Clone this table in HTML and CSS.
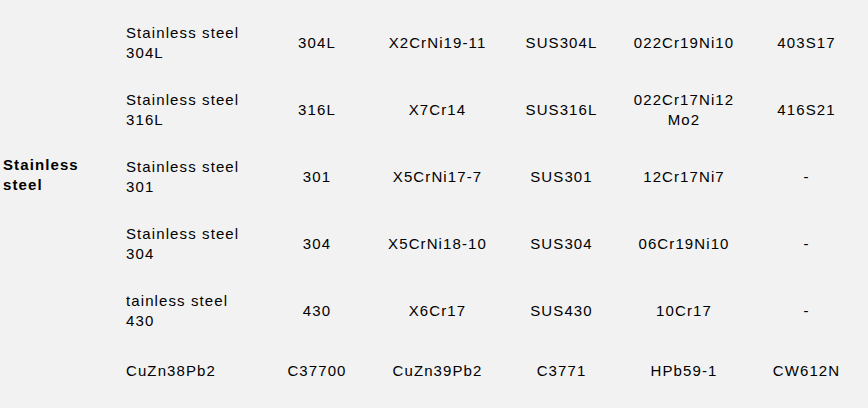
FILE: index.html
```html
<!DOCTYPE html>
<html>
<head>
<meta charset="utf-8">
<link rel="stylesheet" href="styles.css">
</head>
<body>
<table class="grades">
  <colgroup>
    <col class="c-cat">
    <col class="c-name">
    <col class="c-3">
    <col class="c-4">
    <col class="c-5">
    <col class="c-6">
    <col class="c-7">
  </colgroup>
  <tbody>
    <tr>
      <td class="cat" rowspan="5">Stainless steel</td>
      <td class="name">Stainless steel 304L</td>
      <td>304L</td>
      <td>X2CrNi19-11</td>
      <td>SUS304L</td>
      <td>022Cr19Ni10</td>
      <td>403S17</td>
    </tr>
    <tr>
      <td class="name">Stainless steel 316L</td>
      <td>316L</td>
      <td>X7Cr14</td>
      <td>SUS316L</td>
      <td>022Cr17Ni12Mo2</td>
      <td>416S21</td>
    </tr>
    <tr>
      <td class="name">Stainless steel 301</td>
      <td>301</td>
      <td>X5CrNi17-7</td>
      <td>SUS301</td>
      <td>12Cr17Ni7</td>
      <td>-</td>
    </tr>
    <tr>
      <td class="name">Stainless steel 304</td>
      <td>304</td>
      <td>X5CrNi18-10</td>
      <td>SUS304</td>
      <td>06Cr19Ni10</td>
      <td>-</td>
    </tr>
    <tr>
      <td class="name">tainless steel 430</td>
      <td>430</td>
      <td>X6Cr17</td>
      <td>SUS430</td>
      <td>10Cr17</td>
      <td>-</td>
    </tr>
    <tr class="last">
      <td class="cat"></td>
      <td class="name">CuZn38Pb2</td>
      <td>C37700</td>
      <td>CuZn39Pb2</td>
      <td>C3771</td>
      <td>HPb59-1</td>
      <td>CW612N</td>
    </tr>
  </tbody>
</table>
</body>
</html>
```

FILE: styles.css
```css
html, body {
  margin: 0;
  padding: 0;
  background: #f2f2f2;
}

body {
  padding-top: 9px;
  font-family: "Liberation Sans", Arial, sans-serif;
  font-size: 15px;
  line-height: 20px;
  color: #000;
  letter-spacing: 1.1px;
}

.grades {
  border-collapse: collapse;
  table-layout: fixed;
  width: 868px;
}

.c-cat { width: 120px; }
.c-name { width: 139px; }
.c-3 { width: 116px; }
.c-4 { width: 125px; }
.c-5 { width: 123px; }
.c-6 { width: 122px; }
.c-7 { width: 123px; }

.grades td {
  height: 67px;
  padding: 0 8px;
  text-align: center;
  vertical-align: middle;
  overflow-wrap: anywhere;
  box-sizing: border-box;
}

.grades td.cat {
  text-align: left;
  font-weight: bold;
  padding: 0 0 4px 3px;
}

.grades td.name {
  text-align: left;
  padding: 0 8px 0 6px;
}

.grades tr.last td {
  height: 53px;
}
```
